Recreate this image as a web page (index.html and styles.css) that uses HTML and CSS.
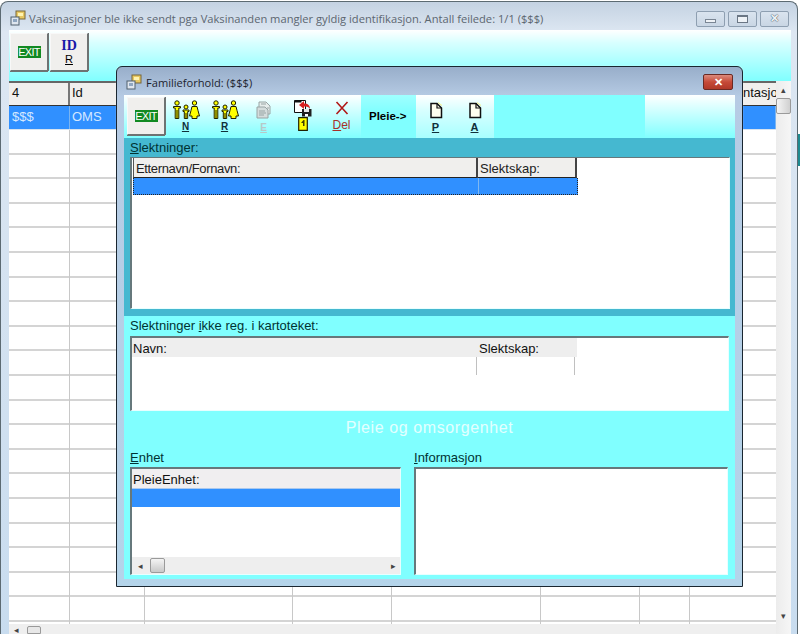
FILE: index.html
```html
<!DOCTYPE html>
<html lang="no">
<head>
<meta charset="utf-8">
<title>Vaksinasjoner</title>
<link rel="stylesheet" href="styles.css">
</head>
<body>
<svg class="defs" width="0" height="0">
  <defs>
    <symbol id="appicon" viewBox="0 0 16 16">
      <rect x="6" y="1" width="9" height="8" fill="#e8c860" stroke="#77663a"/>
      <rect x="8" y="3" width="5" height="3" fill="#fff3b0"/>
      <rect x="1" y="7" width="8" height="8" fill="#dfe6ee" stroke="#50606e"/>
      <rect x="3" y="9" width="4" height="3" fill="#8fa6c0"/>
    </symbol>
    <symbol id="family" viewBox="0 0 28 20">
      <g fill="#ffff00" stroke="#202000" stroke-width="1">
        <circle cx="5" cy="3" r="2.2"/>
        <path d="M1.5 6.5h7v1.5h-1.7v10.500h-3.600v-10.500h-1.700z"/>
        <path d="M5 10v8" fill="none"/>
        <circle cx="14" cy="7" r="2"/>
        <path d="M11 10h6v1.500h-1.300v7h-3.400v-7h-1.300z"/>
        <path d="M14 13v5" fill="none"/>
        <circle cx="22.500" cy="3" r="2.200"/>
        <path d="M20 6.500h5l1 4 1.500 5.500h-2.500v2.500h-5v-2.500h-2.500l1.500-5.500z"/>
      </g>
    </symbol>
    <symbol id="page" viewBox="0 0 14 17">
      <path d="M2 1.500h6l4.500 4.500v9.500h-10.500z" fill="#fffff0" stroke="#101010" stroke-width="1.500"/>
      <path d="M8 1.500v4.500h4.500" fill="none" stroke="#101010" stroke-width="1.200"/>
      <path d="M9 0.500l4 3" stroke="#f6f080" stroke-width="1" fill="none"/>
    </symbol>
  </defs>
</svg>

<div class="window">
  <header class="titlebar">
    <svg class="appicon"><use href="#appicon"/></svg>
    <span class="title">Vaksinasjoner ble ikke sendt pga Vaksinanden mangler gyldig identifikasjon. Antall feilede: 1/1 ($$$)</span>
    <div class="caption">
      <span class="capbtn"><i class="glyph-min"></i></span>
      <span class="capbtn"><i class="glyph-max"></i></span>
      <span class="capbtn glyph-x">✕</span>
    </div>
  </header>
  <div class="client">
    <div class="maintools">
      <button class="bevel"><span class="exit">EXIT</span></button>
      <button class="bevel idbtn"><span class="idtext">ID</span><span class="idkey">R</span></button>
    </div>
    <div class="gridarea">
      <div class="grid">
        <div class="cols headrow">
          <div>4</div><div>Id</div><div></div><div></div><div></div><div></div><div></div><div class="clipped">ntasjon</div>
        </div>
        <div class="cols selrow">
          <div>$$$</div><div>OMS</div><div></div><div></div><div></div><div></div><div></div><div></div>
        </div>
        <div class="cols emptyrows">
          <div></div><div></div><div></div><div></div><div></div><div></div><div></div><div></div>
        </div>
        <div class="hscroll">
          <span class="arrow">◂</span><span class="thumb"></span>
        </div>
      </div>
      <div class="vscroll">
        <span class="arrow up">▴</span>
        <span class="vthumb"></span>
        <span class="arrow down">▾</span>
      </div>
    </div>
  </div>
</div>
<div class="sliver"></div>

<section class="dialog">
  <header class="dlgtitle">
    <svg class="appicon"><use href="#appicon"/></svg>
    <span class="dlgname">Familieforhold: ($$$)</span>
    <span class="closebtn">✕</span>
  </header>
  <div class="dlgbody">
    <div class="dlgtools">
      <button class="bevel dlgexit"><span class="exit">EXIT</span></button>
      <div class="tool">
        <svg class="ico-family"><use href="#family"/></svg>
        <span class="key">N</span>
      </div>
      <div class="tool">
        <svg class="ico-family"><use href="#family"/></svg>
        <span class="key">R</span>
      </div>
      <div class="tool">
        <svg class="ico-e" viewBox="0 0 16 18">
          <path d="M3 1h7l4 4v8H3z" fill="#e6eceb" stroke="#98a4a4"/>
          <path d="M1 6h8l3 3v8H1z" fill="#d4dcdc" stroke="#98a4a4"/>
          <path d="M3 10h6M3 12h7M3 14h5M5 3h5M11 7h2" stroke="#98a4a4"/>
        </svg>
        <span class="key off">E</span>
      </div>
      <div class="tool">
        <svg class="ico-save" viewBox="0 0 18 17">
          <path d="M0.500 0.500h11v12h-11z" fill="#fff" stroke="#101010" stroke-width="1"/>
          <path d="M0.500 0.500h7v2h-7z" fill="#101010"/>
          <path d="M8 9h9.500v7.500H8z" fill="#202020"/>
          <path d="M10 9h5v3h-5z" fill="#e8e8e8"/>
          <path d="M11 14h3v2.500h-3z" fill="#fff"/>
          <path d="M5 5l5-4v2.500c4 0 6 2 6 5.500-1-2-3-2.500-6-2.500V9z" fill="#d82020"/>
        </svg>
        <svg class="ico-card" viewBox="0 0 10 14">
          <path d="M0.700 0.700h8.600v12.600H0.700z" fill="#ffff00" stroke="#202000" stroke-width="1.200"/>
          <path d="M5.500 3l-2.500 3h2v3h1.500V3z" fill="#404000"/>
        </svg>
      </div>
      <div class="tool">
        <svg class="ico-x" viewBox="0 0 14 14">
          <path d="M1.500 1l11 12M12.500 1l-11 12" stroke="#b01818" stroke-width="1.600" fill="none"/>
        </svg>
        <span class="delkey"><u>D</u>el</span>
      </div>
      <div class="pleie">Pleie-&gt;</div>
      <div class="tool doc">
        <svg class="ico-page"><use href="#page"/></svg>
        <span class="key">P</span>
      </div>
      <div class="tool doc">
        <svg class="ico-page"><use href="#page"/></svg>
        <span class="key">A</span>
      </div>
      <div class="toolfill"></div>
    </div>

    <div class="upper">
      <div class="label"><u>S</u>lektninger:</div>
      <div class="listbox upperlist">
        <div class="ulhead"><div class="tight">Etternavn/Fornavn:</div><div>Slektskap:</div></div>
        <div class="ulsel"><div></div><div></div></div>
      </div>
    </div>

    <div class="lower">
      <div class="label">Slektninger <u>i</u>kke reg. i kartoteket:</div>
      <div class="listbox lowerlist">
        <div class="llhead"><div>Navn:</div><div>Slektskap:</div></div>
        <div class="llrow"><div></div><div></div></div>
      </div>
      <h2 class="banner">Pleie og omsorgenhet</h2>
      <div class="twocol">
        <div class="colunit">
          <div class="label"><u>E</u>nhet</div>
          <div class="listbox unitlist">
            <div class="unithead">PleieEnhet:</div>
            <div class="unitsel"></div>
            <div class="unitspace"></div>
            <div class="unitscroll">
              <span class="arrow">◂</span><span class="thumb2"></span><span class="arrow right">▸</span>
            </div>
          </div>
        </div>
        <div class="colinfo">
          <div class="label"><u>I</u>nformasjon</div>
          <div class="listbox infolist"></div>
        </div>
      </div>
    </div>
  </div>
</section>
</body>
</html>
```
FILE: styles.css
```css
* { box-sizing: border-box; }
html, body { margin: 0; padding: 0; }
body {
  width: 800px;
  height: 634px;
  overflow: hidden;
  background: #fff;
  font-family: "Liberation Sans", Arial, sans-serif;
  font-size: 13px;
  color: #111;
  position: relative;
}
.defs { position: absolute; }
button { font: inherit; padding: 0; margin: 0; }
u { text-underline-offset: 1px; }

/* Outer window */
.window {
  width: 798px;
  height: 640px;
  margin-top: 1px;
  border: 1px solid #5c6a72;
  border-bottom: 0;
  border-radius: 8px 8px 0 0;
  background: linear-gradient(#c4d2e2 0, #dde7f2 30px, #c8dcef 100%);
  display: flex;
  flex-direction: column;
}
.titlebar {
  height: 28px;
  flex: none;
  display: flex;
  align-items: center;
  padding: 4px 8px 0 9px;
}
.appicon { width: 16px; height: 16px; flex: none; }
.title {
  margin-left: 3px;
  font-family: "Open Sans", sans-serif;
  font-size: 11.15px;
  color: #5c6670;
  white-space: nowrap;
}
.caption { margin-left: auto; display: flex; gap: 3px; margin-top: 1px; }
.capbtn {
  width: 29px;
  height: 16px;
  border: 1px solid #8e9fb1;
  border-radius: 2px;
  background: linear-gradient(#dae4ef, #c9d6e4);
  display: flex;
  align-items: center;
  justify-content: center;
  color: #eef2f6;
  text-shadow: 0 0 1px #455260, 0 0 1px #455260;
  font-size: 11px;
  font-weight: bold;
}
.glyph-min { width: 11px; height: 4px; margin-top: 5px; background: #eef2f6; border: 1px solid #7a8694; }
.glyph-max { width: 11px; height: 8px; background: #eef2f6; border: 1px solid #6a7684; border-top-width: 2px; }

.client { flex: 1; margin: 0 6px 0 8px; display: flex; flex-direction: column; min-height: 0; }
.maintools {
  height: 51px;
  flex: none;
  padding: 3px 0 0 1px;
  display: flex;
  align-items: flex-start;
  gap: 2px;
  background: linear-gradient(#fff 0, #d8ffff 25%, #80ffff 100%);
}
.bevel {
  width: 38px;
  height: 38px;
  background: #f0efed;
  border: 1px solid;
  border-color: #f8f8f8 #6e7272 #6e7272 #f8f8f8;
  box-shadow: 0 1px 0 #6e7272, 1px 0 0 #6e7272;
  display: flex;
  flex-direction: column;
  align-items: center;
  justify-content: center;
}
.exit {
  background: #128a22;
  color: #fff;
  font-size: 11px;
  line-height: 12px;
  width: 23px;
  text-align: center;
  letter-spacing: -0.7px;
  display: block;
}
.idtext {
  font-family: "Liberation Serif", serif;
  font-size: 14px;
  font-weight: bold;
  color: #1818a8;
  line-height: 15px;
}
.idkey { font-size: 11px; text-decoration: underline; line-height: 13px; }

.gridarea { flex: 1; display: flex; min-height: 0; }
.grid { width: 767px; flex: none; display: flex; flex-direction: column; background: #fff; overflow: hidden; }
.cols { display: grid; grid-template-columns: 61px 75px 148px 99px 149px 99px 50px 86px; flex: none; }
.headrow {
  height: 25px;
  background: #f0efed;
  border-top: 2px solid #666;
  border-bottom: 1px solid #333;
  line-height: 20px;
  color: #111;
}
.headrow > div { padding-left: 3px; border-right: 2px solid #777; }
.headrow > div:nth-child(2) { padding-left: 2px; }
.headrow > div:nth-child(n+3) { border-right-color: #e2e2e2; }
.clipped { padding-left: 53px !important; overflow: hidden; white-space: nowrap; border-right: 0 !important; }
.selrow { height: 24px; background: #3090ff; color: #d4e8ff; line-height: 21px; border-bottom: 1px solid #d8e4f0; }
.selrow > div { padding-left: 3px; border-right: 1px solid #7ab4f0; }
.selrow > div:nth-child(2) { padding-left: 2px; }
.emptyrows {
  flex: 1;
  background: repeating-linear-gradient(#fff 0, #fff 22.6px, #d4d4d4 22.6px, #d4d4d4 24.6px);
}
.emptyrows > div { border-right: 1px solid #c8c8c8; }
.emptyrows > div:last-child { border-right: 0; }
.hscroll {
  height: 10px;
  flex: none;
  background: #efefef;
  display: flex;
  align-items: flex-start;
  padding-left: 5px;
  margin-bottom: 7px;
  color: #333;
}
.arrow { font-size: 9px; line-height: 12px; color: #444; }
.thumb { width: 14px; height: 8px; margin: 2px 0 0 8px; background: #e8e8e8; border: 1px solid #9a9a9a; border-radius: 2px 2px 0 0; }
.vscroll {
  width: 15px;
  flex: none;
  background: linear-gradient(90deg, #ececec, #f6f6f6);
  position: relative;
  display: flex;
  flex-direction: column;
  align-items: center;
  padding-top: 3px;
}
.vscroll .arrow.up { height: 14px; }
.vthumb { width: 15px; height: 16px; background: linear-gradient(90deg, #f4f4f4, #d0d0d0); border: 1px solid #9a9a9a; border-radius: 2px; }
.vscroll .arrow.down { margin-top: 496px; }
.sliver { position: absolute; left: 798px; top: 134px; width: 2px; height: 32px; background: #1e8a90; }

/* Dialog */
.dialog {
  position: absolute;
  left: 116px;
  top: 66px;
  width: 627px;
  height: 521px;
  border: 1px solid #1a2630;
  border-radius: 6px 6px 0 0;
  background: linear-gradient(#98aeca 0, #b6cbe4 30px, #b4d4ea 100%);
  padding: 0 7px 7px 7px;
  display: flex;
  flex-direction: column;
  box-shadow: 0 0 1px #fff;
}
.dlgtitle { height: 28px; flex: none; display: flex; align-items: center; padding: 2px 2px 0 2px; }
.dlgname { margin-left: 4px; font-family: "Open Sans", sans-serif; font-size: 11.1px; color: #1c2430; white-space: nowrap; }
.closebtn {
  margin-left: auto;
  margin-top: 0;
  width: 30px;
  height: 16px;
  border: 1px solid #6a2a24;
  border-radius: 2px;
  background: linear-gradient(#dc8a7c, #c64a38 50%, #b03828);
  color: #fff;
  font-size: 11px;
  font-weight: bold;
  line-height: 14px;
  text-align: center;
}
.dlgbody { flex: 1; display: flex; flex-direction: column; min-height: 0; }
.dlgtools {
  height: 43px;
  flex: none;
  display: flex;
  padding-left: 3px;
  background: linear-gradient(#fff 0, #d8ffff 30%, #80ffff 100%);
}
.dlgexit { margin-top: 2px; flex: none; }
.tool {
  width: 39px;
  flex: none;
  display: flex;
  flex-direction: column;
  align-items: center;
  padding-top: 5px;
}
.dlgexit + .tool { margin-left: 1px; }
.ico-family { width: 28px; height: 20px; }
.key {
  font-size: 10px;
  font-weight: bold;
  line-height: 12px;
  color: #10303a;
  text-decoration: underline;
  margin-top: 1px;
}
.key.off { color: #b8c8c8; }
.ico-e { width: 16px; height: 18px; margin-top: 1px; margin-bottom: 2px; }
.ico-save { width: 18px; height: 17px; flex: none; }
.ico-card { width: 10px; height: 14px; flex: none; }
.ico-x { width: 14px; height: 14px; margin-top: 1px; }
.delkey { color: #a83028; font-size: 12px; line-height: 14px; margin-top: 3px; }
.pleie {
  width: 55px;
  flex: none;
  background: linear-gradient(#a0ffff, #80ffff 40%);
  font-weight: bold;
  font-size: 11.5px;
  color: #000;
  padding: 15px 0 0 8px;
}
.doc { padding-top: 7px; background: linear-gradient(#fff 0, #d8ffff 35%, #a8ffff 100%); }
.ico-page { width: 14px; height: 17px; }
.doc .key { font-size: 11px; margin-top: 2px; }
.toolfill { width: 151px; flex: none; background: #80ffff; }

.upper { height: 178px; flex: none; background: #45b8d0; padding: 3px 5px 7px 6px; display: flex; flex-direction: column; }
.label { color: #033; line-height: 14px; white-space: nowrap; }
.listbox { background: #fff; border: 1px solid #e8ffff; border-top: 2px solid #66787c; border-left: 2px solid #66787c; }
.upperlist { height: 152px; margin-top: 2px; border-top-width: 1px; }
.ulhead { display: grid; grid-template-columns: 345px 99px; width: 445px; margin-left: 1px; }
.ulhead > div {
  height: 20px;
  line-height: 21px;
  background: #f0efed;
  padding-left: 2px;
  border-right: 2px solid #444;
  border-bottom: 1px solid #222;
  border-left: 1px solid #555;
  color: #222;
  white-space: nowrap;
}
.ulhead > div + div { border-left: 0; }
.ulhead .tight { letter-spacing: -0.35px; }
.ulsel {
  display: grid;
  grid-template-columns: 345px 99px;
  width: 445px;
  margin-left: 1px;
  height: 17px;
  background: #3090ff;
  border: 1px dotted #222;
  border-top: 0;
}
.ulsel > div:first-child { border-right: 1px solid #80b8f0; }

.lower { flex: 1; background: #80ffff; padding: 3px 6px 4px 6px; display: flex; flex-direction: column; min-height: 0; }
.lowerlist { height: 75px; margin-top: 3px; }
.llhead { display: grid; grid-template-columns: 345px 99px; width: 445px; height: 19px; background: #eee; line-height: 22px; }
.llhead > div { padding-left: 1px; }
.llhead > div + div { padding-left: 2px; }
.llrow { display: grid; grid-template-columns: 345px 98px; width: 445px; height: 18px; }
.llrow > div { border-right: 1px solid #c0c0c0; }
.banner {
  margin: 7px 0 0 0;
  height: 33px;
  font-size: 16px;
  font-weight: normal;
  letter-spacing: 0.6px;
  line-height: 19px;
  text-align: center;
  color: #e4ffff;
}
.twocol { display: flex; gap: 13px; flex: 1; min-height: 0; }
.colunit { width: 271px; flex: none; display: flex; flex-direction: column; }
.colinfo { width: 314px; flex: none; display: flex; flex-direction: column; }
.unitlist { flex: 1; margin-top: 2px; display: flex; flex-direction: column; }
.unithead { height: 20px; flex: none; line-height: 22px; background: #f0eef0; padding-left: 1px; border-bottom: 1px solid #aac8ee; }
.unitsel { height: 18px; flex: none; background: #3090ff; }
.unitspace { flex: 1; }
.unitscroll { height: 17px; flex: none; background: #eee; display: flex; align-items: center; padding: 0 4px 0 6px; }
.thumb2 { width: 15px; height: 15px; margin-left: 7px; background: linear-gradient(#f4f4f4, #c8c8c8); border: 1px solid #9a9a9a; border-radius: 2px; }
.unitscroll .right { margin-left: auto; }
.infolist { flex: 1; margin-top: 2px; }
```
